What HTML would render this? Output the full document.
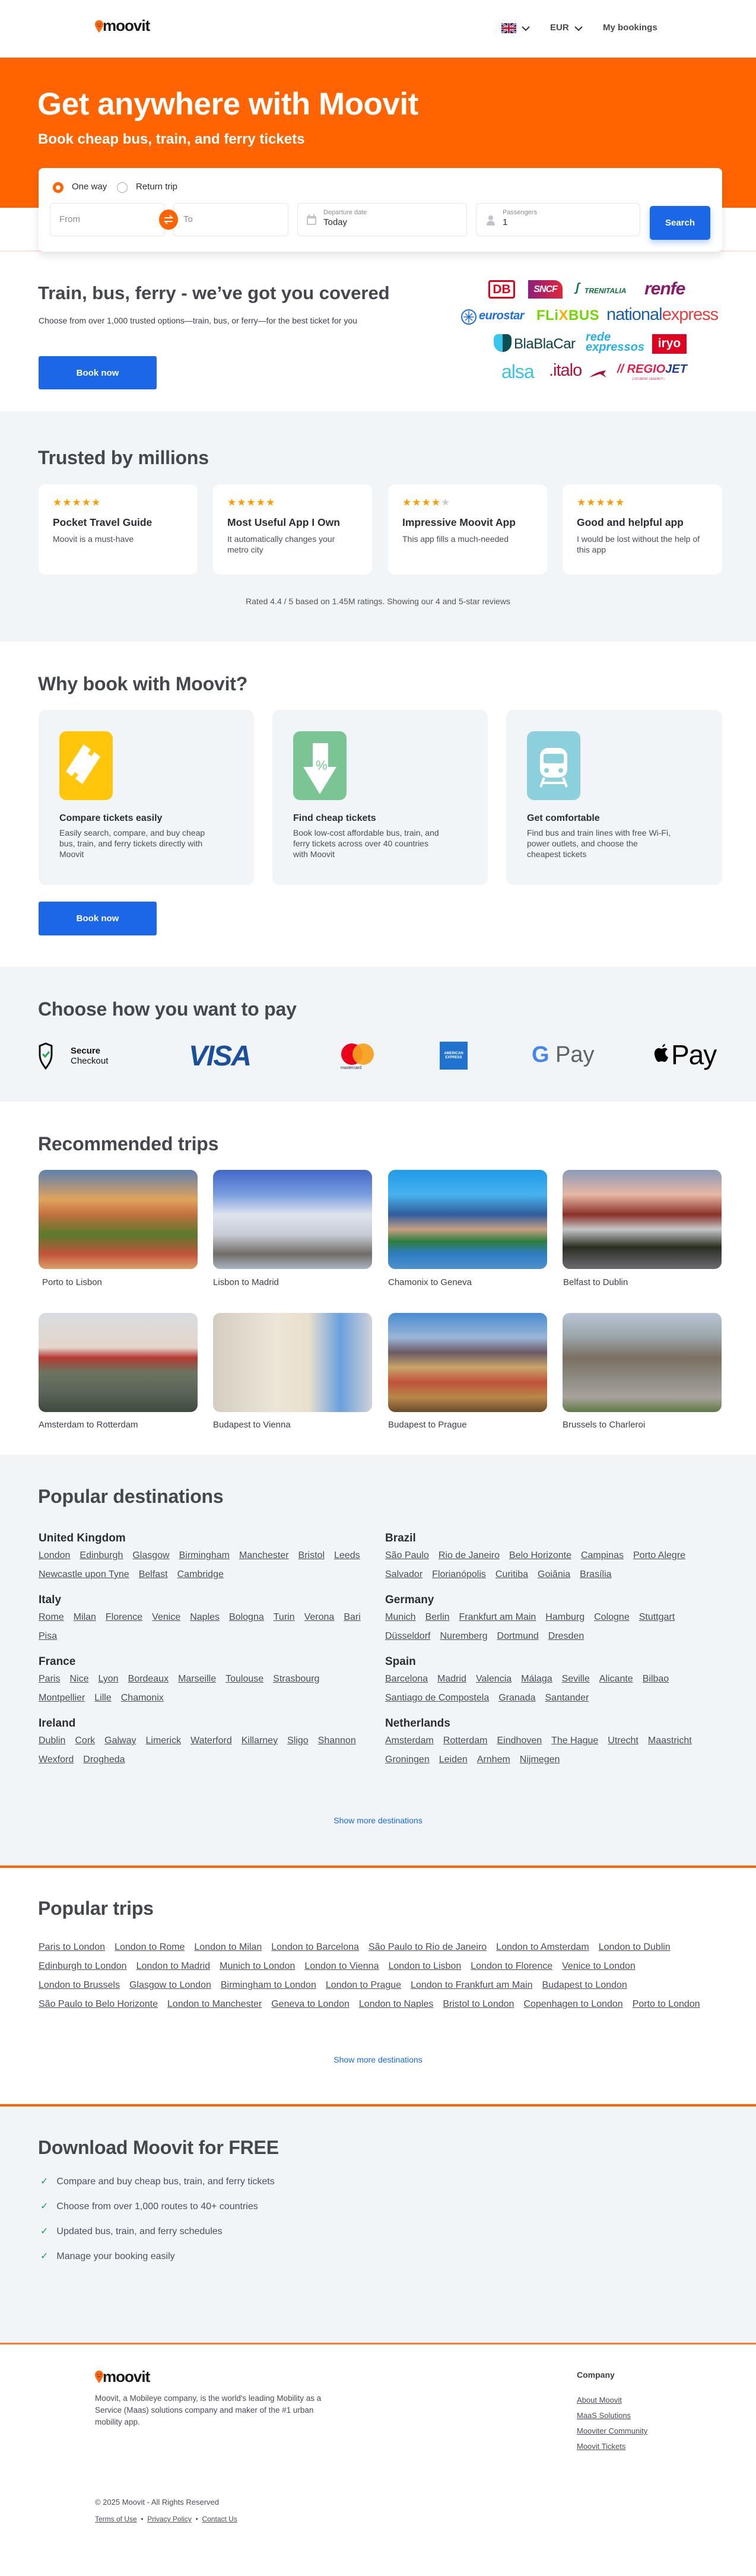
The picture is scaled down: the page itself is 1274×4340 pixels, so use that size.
<!DOCTYPE html>
<html><head><meta charset="utf-8"><title>Moovit</title>
<style>
*{box-sizing:border-box;margin:0;padding:0}
body{width:1274px;height:4340px;position:relative;font-family:"Liberation Sans",Arial,sans-serif;color:#3c3f48;background:#fff;overflow:hidden}
.a{position:absolute}
.h2{font-size:32px;font-weight:700;color:#45474f;letter-spacing:-0.2px}
.btn{background:#1c67e6;color:#fff;font-weight:700;font-size:15px;border-radius:3px;display:flex;align-items:center;justify-content:center}
.card{background:#fff;border-radius:12px}
.stars{color:#ff9a00;font-size:17px;letter-spacing:1px}
.ct{font-size:17.5px;font-weight:700;color:#2b2d33}
.cd{font-size:14px;color:#4a4d56;line-height:18px;margin-top:8px}
.links a{color:#4a4d56;text-decoration:underline;font-size:16px;margin-right:16px;display:inline-block;line-height:32px}
.cty{font-size:19px;font-weight:700;color:#2b2d33}
.cty.m{margin-top:16px}
.trip{border-radius:12px;height:167px;width:268px}
.tl{font-size:15px;color:#3c3f48}
.sm{color:#1c67e6;font-size:14px;text-align:center;width:1274px;left:0}
.chk{font-size:16px;color:#4a4f5c}
.chk b{color:#16a05a;font-weight:400;margin-right:14px}
.fl a{display:block;color:#4a4d56;font-size:13px;text-decoration:underline}
</style></head><body>

<!-- header -->
<div class="a" style="left:160px;top:34px;width:13px;height:20px">
<svg width="14" height="22" viewBox="0 0 14 22"><path d="M7 0C3 0 0 3 0 7c0 5 7 14 7 14s7-9 7-14C14 3 11 0 7 0z" fill="#ff6a10"/><circle cx="4.7" cy="6.5" r=".9" fill="#222"/><circle cx="9.3" cy="6.5" r=".9" fill="#222"/><path d="M4.5 9.5q2.5 2 5 0" stroke="#222" fill="none" stroke-width=".9"/></svg></div>
<div class="a" style="left:173px;top:28px;font-size:26px;font-weight:700;color:#1a1a1a;letter-spacing:-1px">moovit</div>
<div class="a" style="left:845px;top:39px;width:25px;height:17px">
<svg width="25" height="17" viewBox="0 0 60 40"><rect width="60" height="40" fill="#012169"/><path d="M0 0L60 40M60 0L0 40" stroke="#fff" stroke-width="8"/><path d="M0 0L60 40M60 0L0 40" stroke="#c8102e" stroke-width="3"/><path d="M30 0v40M0 20h60" stroke="#fff" stroke-width="12"/><path d="M30 0v40M0 20h60" stroke="#c8102e" stroke-width="7"/></svg></div>
<svg class="a" style="left:879px;top:43px" width="14" height="10"><path d="M1 2l6 6 6-6" stroke="#333" stroke-width="2" fill="none"/></svg>
<div class="a" style="left:927px;top:38px;font-size:15px;font-weight:700;color:#4a4a4a">EUR</div>
<svg class="a" style="left:968px;top:43px" width="14" height="10"><path d="M1 2l6 6 6-6" stroke="#333" stroke-width="2" fill="none"/></svg>
<div class="a" style="left:1016px;top:38px;font-size:15px;font-weight:700;color:#4a4a4a">My bookings</div>

<!-- hero -->
<div class="a" style="left:0;top:97px;width:1274px;height:253px;background:#ff6400"></div>
<div class="a" style="left:0;top:422px;width:1274px;height:2px;background:#fde3d2"></div>
<div class="a" style="left:63px;top:145px;font-size:53px;font-weight:700;color:#fff;letter-spacing:-0.5px">Get anywhere with Moovit</div>
<div class="a" style="left:64px;top:221px;font-size:24px;font-weight:700;color:#fff">Book cheap bus, train, and ferry tickets</div>

<div class="a" style="left:65px;top:283px;width:1152px;height:141px;background:#fff;border-radius:8px;box-shadow:0 6px 14px rgba(0,0,0,.12)"></div>
<div class="a" style="left:89px;top:307px;width:18px;height:18px;border-radius:50%;border:5px solid #ff6400"></div>
<div class="a" style="left:121px;top:306px;font-size:15px;color:#2b2d33">One way</div>
<div class="a" style="left:197px;top:307px;width:18px;height:18px;border-radius:50%;border:1px solid #aaa"></div>
<div class="a" style="left:229px;top:306px;font-size:15px;color:#2b2d33">Return trip</div>

<div class="a" style="left:84px;top:342px;width:194px;height:56px;border:1px solid #e4e6ea;border-radius:6px"></div>
<div class="a" style="left:100px;top:361px;font-size:15px;color:#8a8d96">From</div>
<div class="a" style="left:292px;top:342px;width:194px;height:56px;border:1px solid #e4e6ea;border-radius:6px"></div>
<div class="a" style="left:309px;top:361px;font-size:15px;color:#8a8d96">To</div>
<div class="a" style="left:268px;top:353px;width:32px;height:34px;border-radius:50%;background:#ff6400"></div>
<svg class="a" style="left:274px;top:360px" width="20" height="20"><path d="M3 7h13l-4-4M17 13H4l4 4" stroke="#fff" stroke-width="2" fill="none"/></svg>
<div class="a" style="left:501px;top:342px;width:286px;height:56px;border:1px solid #e4e6ea;border-radius:6px"></div>
<svg class="a" style="left:516px;top:360px" width="18" height="20"><rect x="1" y="4" width="16" height="15" rx="2" fill="#c2c3cc"/><rect x="3" y="8" width="12" height="9" fill="#fff"/><rect x="4" y="1" width="2" height="4" fill="#c2c3cc"/><rect x="12" y="1" width="2" height="4" fill="#c2c3cc"/></svg>
<div class="a" style="left:545px;top:352px;font-size:11px;color:#8a8d96">Departure date</div>
<div class="a" style="left:545px;top:366px;font-size:15px;color:#2b2d33">Today</div>
<div class="a" style="left:802px;top:342px;width:277px;height:56px;border:1px solid #e4e6ea;border-radius:6px"></div>
<svg class="a" style="left:819px;top:362px" width="16" height="18"><circle cx="8" cy="5" r="4" fill="#c2c3cc"/><path d="M1 18c0-6 3-8 7-8s7 2 7 8z" fill="#c2c3cc"/></svg>
<div class="a" style="left:847px;top:352px;font-size:11px;color:#8a8d96">Passengers</div>
<div class="a" style="left:847px;top:366px;font-size:15px;color:#2b2d33">1</div>
<div class="a btn" style="left:1095px;top:347px;width:102px;height:57px;border-radius:5px;box-shadow:0 5px 10px rgba(28,103,230,.3)">Search</div>

<!-- covered -->
<div class="a" style="left:64px;top:476px;font-size:31px;font-weight:700;color:#45474f">Train, bus, ferry - we’ve got you covered</div>
<div class="a" style="left:65px;top:532px;font-size:14px;color:#3c3f48">Choose from over 1,000 trusted options—train, bus, or ferry—for the best ticket for you</div>
<div class="a btn" style="left:65px;top:600px;width:199px;height:56px">Book now</div>

<!-- operator logos -->
<div class="a" style="left:823px;top:472px;width:45px;height:31px;border:3px solid #e3001b;border-radius:4px;color:#e3001b;font-weight:700;font-size:21px;text-align:center;line-height:25px">DB</div>
<div class="a" style="left:890px;top:472px;width:58px;height:31px;background:linear-gradient(90deg,#8e1d7d,#e3263a);border-radius:0 14px 0 0;color:#fff;font-weight:700;font-style:italic;font-size:16px;text-align:center;line-height:31px;letter-spacing:-1px">SNCF</div>
<div class="a" style="left:970px;top:474px;font-size:20px;font-weight:700;font-style:italic;color:#0d7a4a">ʃ</div>
<div class="a" style="left:985px;top:483px;font-size:12px;font-weight:700;font-style:italic;color:#0d6a3e">TRENITALIA</div>
<div class="a" style="left:1086px;top:470px;font-size:30px;font-weight:700;font-style:italic;color:#8a1a6a;letter-spacing:-1px">renfe</div>

<svg class="a" style="left:776px;top:520px" width="28" height="28"><circle cx="14" cy="14" r="12" fill="none" stroke="#1f6ee9" stroke-width="2"/><path d="M14 4v20M5 14h18M8 8l12 12M20 8L8 20" stroke="#1f6ee9" stroke-width="1.5"/></svg>
<div class="a" style="left:807px;top:521px;font-size:20px;font-weight:700;font-style:italic;color:#1f6ee9;letter-spacing:-0.5px">eurostar</div>
<div class="a" style="left:904px;top:518px;font-size:24px;font-weight:700;color:#73d700;letter-spacing:0.5px">FLi<span style="color:#ffad00">X</span>BUS</div>
<div class="a" style="left:1022px;top:514px;font-size:29px;color:#1d5ea8;letter-spacing:-1px">national<span style="color:#e63f3f">express</span></div>

<div class="a" style="left:832px;top:563px;width:30px;height:30px;border-radius:8px 8px 16px 16px;background:linear-gradient(90deg,#3ac7ef 50%,#0b4f53 50%)"></div>
<div class="a" style="left:866px;top:566px;font-size:24px;color:#0b4049;letter-spacing:-0.5px">BlaBlaCar</div>
<div class="a" style="left:987px;top:560px;font-size:20px;font-weight:700;color:#26b2e8;line-height:17px;font-style:italic">rede<br>expressos</div>
<div class="a" style="left:1099px;top:563px;width:58px;height:33px;background:#e00022;color:#fff;font-weight:700;font-size:21px;text-align:center;line-height:31px">iryo</div>

<div class="a" style="left:845px;top:608px;font-size:32px;color:#3ac2e8;letter-spacing:-1px">alsa</div>
<div class="a" style="left:925px;top:608px;font-size:29px;color:#a8123b;letter-spacing:-1px">.italo</div>
<svg class="a" style="left:993px;top:622px" width="30" height="16"><path d="M0 14Q12 4 28 2L24 8 29 14 18 8Z" fill="#a8123b"/></svg>
<div class="a" style="left:1040px;top:611px;font-size:20px;font-weight:700;font-style:italic;color:#e41f4e">// REGIO<span style="color:#1c3f94">JET</span></div>
<div class="a" style="left:1066px;top:636px;font-size:5px;color:#e41f4e">| STUDENT | AGENCY |</div>

<!-- trusted -->
<div class="a" style="left:0;top:693px;width:1274px;height:388px;background:#f2f5f8"></div>
<div class="a h2" style="left:64px;top:753px">Trusted by millions</div>
<div class="a card" style="left:65px;top:816px;width:268px;height:152px;padding:21px 24px">
<div class="stars">★★★★★</div><div class="ct" style="margin-top:13px">Pocket Travel Guide</div><div class="cd">Moovit is a must-have</div></div>
<div class="a card" style="left:359px;top:816px;width:268px;height:152px;padding:21px 24px">
<div class="stars">★★★★★</div><div class="ct" style="margin-top:13px">Most Useful App I Own</div><div class="cd">It automatically changes your<br>metro city</div></div>
<div class="a card" style="left:654px;top:816px;width:268px;height:152px;padding:21px 24px">
<div class="stars">★★★★<span style="color:#ccc">★</span></div><div class="ct" style="margin-top:13px">Impressive Moovit App</div><div class="cd">This app fills a much-needed</div></div>
<div class="a card" style="left:948px;top:816px;width:269px;height:152px;padding:21px 24px">
<div class="stars">★★★★★</div><div class="ct" style="margin-top:13px">Good and helpful app</div><div class="cd">I would be lost without the help of<br>this app</div></div>
<div class="a" style="left:0;width:1274px;top:1005px;text-align:center;font-size:14px;color:#555">Rated 4.4 / 5 based on 1.45M ratings. Showing our 4 and 5-star reviews</div>

<!-- why -->
<div class="a h2" style="left:64px;top:1134px">Why book with Moovit?</div>
<div class="a" style="left:65px;top:1196px;width:363px;height:295px;background:#f2f5f8;border-radius:12px"></div>
<div class="a" style="left:459px;top:1196px;width:363px;height:295px;background:#f2f5f8;border-radius:12px"></div>
<div class="a" style="left:853px;top:1196px;width:364px;height:295px;background:#f2f5f8;border-radius:12px"></div>
<div class="a" style="left:100px;top:1232px;width:90px;height:116px;background:#ffc60b;border-radius:12px"></div>
<svg class="a" style="left:108px;top:1252px" width="74" height="76"><path d="M33 2l12 9-5 7 6 4 5-7 10 8-30 46-12-9 5-7-6-4-5 7-10-8z" fill="#fff"/></svg>
<div class="a" style="left:494px;top:1232px;width:90px;height:116px;background:#7ac593;border-radius:12px"></div>
<svg class="a" style="left:510px;top:1252px" width="58" height="86"><path d="M17 0h26v40h14L29 86 1 40h16z" fill="#fff"/><text x="22" y="45" font-family="Liberation Sans" font-size="22" fill="#7ac593">%</text></svg>
<div class="a" style="left:888px;top:1232px;width:90px;height:116px;background:#8dd0dd;border-radius:12px"></div>
<svg class="a" style="left:907px;top:1258px" width="52" height="70"><rect x="3" y="2" width="46" height="50" rx="14" fill="#fff"/><rect x="9" y="12" width="34" height="16" rx="3" fill="#8dd0dd"/><circle cx="14" cy="40" r="4" fill="#8dd0dd"/><circle cx="38" cy="40" r="4" fill="#8dd0dd"/><path d="M10 52L4 68M42 52l6 16M8 61h36" stroke="#fff" stroke-width="4"/></svg>
<div class="a" style="left:100px;top:1370px"><div class="ct" style="font-size:16px">Compare tickets easily</div><div class="cd" style="margin-top:6px">Easily search, compare, and buy cheap<br>bus, train, and ferry tickets directly with<br>Moovit</div></div>
<div class="a" style="left:494px;top:1370px"><div class="ct" style="font-size:16px">Find cheap tickets</div><div class="cd" style="margin-top:6px">Book low-cost affordable bus, train, and<br>ferry tickets across over 40 countries<br>with Moovit</div></div>
<div class="a" style="left:888px;top:1370px"><div class="ct" style="font-size:16px">Get comfortable</div><div class="cd" style="margin-top:6px">Find bus and train lines with free Wi-Fi,<br>power outlets, and choose the<br>cheapest tickets</div></div>
<div class="a btn" style="left:65px;top:1519px;width:199px;height:57px">Book now</div>

<!-- pay -->
<div class="a" style="left:0;top:1629px;width:1274px;height:227px;background:#f2f5f8"></div>
<div class="a h2" style="left:64px;top:1682px">Choose how you want to pay</div>
<svg class="a" style="left:65px;top:1756px" width="24" height="46"><path d="M12 2L2 6v14c0 10 4 16 10 24 6-8 10-14 10-24V6z" fill="none" stroke="#111" stroke-width="3"/><path d="M7 20l4 4 7-8" stroke="#1aaa55" stroke-width="3" fill="none"/></svg>
<div class="a" style="left:119px;top:1762px;font-size:15px;font-weight:700;color:#111">Secure</div>
<div class="a" style="left:119px;top:1779px;font-size:15px;color:#111">Checkout</div>
<div class="a" style="left:318px;top:1752px;font-size:48px;font-weight:700;font-style:italic;color:#1a4f9c;letter-spacing:-2px">VISA</div>
<div class="a" style="left:575px;top:1758px;width:36px;height:36px;border-radius:50%;background:#eb001b"></div>
<div class="a" style="left:594px;top:1758px;width:36px;height:36px;border-radius:50%;background:#f79e1b;opacity:.92"></div>
<div class="a" style="left:574px;top:1796px;font-size:7px;color:#222">mastercard</div>
<div class="a" style="left:741px;top:1755px;width:47px;height:47px;background:#1f72cd;color:#fff;font-size:6px;font-weight:700;text-align:center;padding-top:17px;line-height:7px">AMERICAN<br>EXPRESS</div>
<div class="a" style="left:896px;top:1756px;font-size:38px;font-weight:700;color:#4285f4">G</div>
<div class="a" style="left:936px;top:1756px;font-size:38px;color:#5f6368">Pay</div>
<div class="a" style="left:1101px;top:1750px;font-size:46px;color:#000;letter-spacing:-1px"><svg width="30" height="40" style="vertical-align:-2px"><path d="M20 4c-3 0-5 3-5 5 3 0 5-3 5-5zM15 12c-3 0-5-2-7-1-4 1-7 5-6 11 1 6 4 12 7 12 2 0 3-1 5-1s3 1 5 1c3 0 5-5 6-8-3-1-5-4-5-7s2-5 4-6c-2-2-4-3-6-2-2 0-3 1-3 1z" fill="#000"/></svg>Pay</div>

<!-- recommended -->
<div class="a h2" style="left:64px;top:1909px">Recommended trips</div>
<div class="a trip" style="left:65px;top:1971px;background:linear-gradient(180deg,#5d7fae 0%,#e0a45c 30%,#c2703e 45%,#5a7a2c 65%,#c2543a 85%,#d9a06a 100%)"></div>
<div class="a trip" style="left:359px;top:1971px;background:linear-gradient(180deg,#4168c8 0%,#7a9de0 25%,#dfe3ec 45%,#c8ccd6 65%,#706d68 85%,#aab4c0 100%)"></div>
<div class="a trip" style="left:654px;top:1971px;background:linear-gradient(180deg,#1f9be8 0%,#48b2ee 25%,#2f5d9c 45%,#c79f82 60%,#2d7e3e 72%,#2f7cc4 85%,#4d90cc 100%)"></div>
<div class="a trip" style="left:948px;top:1971px;background:linear-gradient(180deg,#8a9ab8 0%,#e8b8a4 25%,#8a3028 45%,#c3c7c7 60%,#2b2e22 78%,#6b6a70 100%)"></div>
<div class="a tl" style="left:71px;top:2152px">Porto to Lisbon</div>
<div class="a tl" style="left:359px;top:2152px">Lisbon to Madrid</div>
<div class="a tl" style="left:654px;top:2152px">Chamonix to Geneva</div>
<div class="a tl" style="left:949px;top:2152px">Belfast to Dublin</div>
<div class="a trip" style="left:65px;top:2212px;background:linear-gradient(180deg,#d8dce0 0%,#e4d6cc 35%,#b53a32 45%,#6b7560 60%,#5b6459 80%,#3f4a3e 100%)"></div>
<div class="a trip" style="left:359px;top:2212px;background:linear-gradient(90deg,#d4cec0 0%,#ece6d8 40%,#e8e0cc 60%,#6aa0de 80%,#cfd2d8 100%)"></div>
<div class="a trip" style="left:654px;top:2212px;background:linear-gradient(180deg,#4a8cd0 0%,#9bb6d8 25%,#6b5a66 40%,#c9a46a 55%,#c0523a 70%,#b8884a 85%,#6b4a2a 100%)"></div>
<div class="a trip" style="left:948px;top:2212px;background:linear-gradient(180deg,#b7c6d4 0%,#9aa3a8 25%,#7b6f62 45%,#8c8a82 65%,#a8a29a 85%,#5f7a44 100%)"></div>
<div class="a tl" style="left:65px;top:2392px">Amsterdam to Rotterdam</div>
<div class="a tl" style="left:359px;top:2392px">Budapest to Vienna</div>
<div class="a tl" style="left:654px;top:2392px">Budapest to Prague</div>
<div class="a tl" style="left:948px;top:2392px">Brussels to Charleroi</div>

<!-- popular destinations -->
<div class="a" style="left:0;top:2451px;width:1274px;height:694px;background:#f2f5f8"></div>
<div class="a h2" style="left:64px;top:2503px">Popular destinations</div>
<div class="a" style="left:65px;top:2581px;width:580px">
<div class="cty">United Kingdom</div>
<div class="links" style="margin-top:2px"><a>London</a><a>Edinburgh</a><a>Glasgow</a><a>Birmingham</a><a>Manchester</a><a>Bristol</a><a>Leeds</a><br><a>Newcastle upon Tyne</a><a>Belfast</a><a>Cambridge</a></div>
<div class="cty m">Italy</div>
<div class="links" style="margin-top:2px"><a>Rome</a><a>Milan</a><a>Florence</a><a>Venice</a><a>Naples</a><a>Bologna</a><a>Turin</a><a>Verona</a><a>Bari</a><br><a>Pisa</a></div>
<div class="cty m">France</div>
<div class="links" style="margin-top:2px"><a>Paris</a><a>Nice</a><a>Lyon</a><a>Bordeaux</a><a>Marseille</a><a>Toulouse</a><a>Strasbourg</a><br><a>Montpellier</a><a>Lille</a><a>Chamonix</a></div>
<div class="cty m">Ireland</div>
<div class="links" style="margin-top:2px"><a>Dublin</a><a>Cork</a><a>Galway</a><a>Limerick</a><a>Waterford</a><a>Killarney</a><a>Sligo</a><a>Shannon</a><br><a>Wexford</a><a>Drogheda</a></div>
</div>
<div class="a" style="left:649px;top:2581px;width:590px">
<div class="cty">Brazil</div>
<div class="links" style="margin-top:2px"><a>São Paulo</a><a>Rio de Janeiro</a><a>Belo Horizonte</a><a>Campinas</a><a>Porto Alegre</a><br><a>Salvador</a><a>Florianópolis</a><a>Curitiba</a><a>Goiânia</a><a>Brasília</a></div>
<div class="cty m">Germany</div>
<div class="links" style="margin-top:2px"><a>Munich</a><a>Berlin</a><a>Frankfurt am Main</a><a>Hamburg</a><a>Cologne</a><a>Stuttgart</a><br><a>Düsseldorf</a><a>Nuremberg</a><a>Dortmund</a><a>Dresden</a></div>
<div class="cty m">Spain</div>
<div class="links" style="margin-top:2px"><a>Barcelona</a><a>Madrid</a><a>Valencia</a><a>Málaga</a><a>Seville</a><a>Alicante</a><a>Bilbao</a><br><a>Santiago de Compostela</a><a>Granada</a><a>Santander</a></div>
<div class="cty m">Netherlands</div>
<div class="links" style="margin-top:2px"><a>Amsterdam</a><a>Rotterdam</a><a>Eindhoven</a><a>The Hague</a><a>Utrecht</a><a>Maastricht</a><br><a>Groningen</a><a>Leiden</a><a>Arnhem</a><a>Nijmegen</a></div>
</div>
<div class="a sm" style="top:3059px">Show more destinations</div>

<!-- popular trips -->
<div class="a" style="left:0;top:3143px;width:1274px;height:4px;background:#ff6400"></div>
<div class="a h2" style="left:64px;top:3197px">Popular trips</div>
<div class="a links" style="left:65px;top:3265px;width:1200px">
<a>Paris to London</a><a>London to Rome</a><a>London to Milan</a><a>London to Barcelona</a><a>São Paulo to Rio de Janeiro</a><a>London to Amsterdam</a><a>London to Dublin</a><br>
<a>Edinburgh to London</a><a>London to Madrid</a><a>Munich to London</a><a>London to Vienna</a><a>London to Lisbon</a><a>London to Florence</a><a>Venice to London</a><br>
<a>London to Brussels</a><a>Glasgow to London</a><a>Birmingham to London</a><a>London to Prague</a><a>London to Frankfurt am Main</a><a>Budapest to London</a><br>
<a>São Paulo to Belo Horizonte</a><a>London to Manchester</a><a>Geneva to London</a><a>London to Naples</a><a>Bristol to London</a><a>Copenhagen to London</a><a>Porto to London</a></div>
<div class="a sm" style="top:3462px">Show more destinations</div>

<!-- download -->
<div class="a" style="left:0;top:3545px;width:1274px;height:404px;background:#f2f5f8;border-top:4px solid #ff6400"></div>
<div class="a h2" style="left:64px;top:3600px">Download Moovit for FREE</div>
<div class="a chk" style="left:68px;top:3665px"><b>✓</b>Compare and buy cheap bus, train, and ferry tickets</div>
<div class="a chk" style="left:68px;top:3707px"><b>✓</b>Choose from over 1,000 routes to 40+ countries</div>
<div class="a chk" style="left:68px;top:3749px"><b>✓</b>Updated bus, train, and ferry schedules</div>
<div class="a chk" style="left:68px;top:3791px"><b>✓</b>Manage your booking easily</div>

<!-- footer -->
<div class="a" style="left:0;top:3947px;width:1274px;height:3px;background:#ff7a2a"></div>
<div class="a" style="left:160px;top:3994px"><svg width="14" height="22" viewBox="0 0 14 22"><path d="M7 0C3 0 0 3 0 7c0 5 7 14 7 14s7-9 7-14C14 3 11 0 7 0z" fill="#ff6a10"/><circle cx="4.7" cy="6.5" r=".9" fill="#222"/><circle cx="9.3" cy="6.5" r=".9" fill="#222"/><path d="M4.5 9.5q2.5 2 5 0" stroke="#222" fill="none" stroke-width=".9"/></svg></div>
<div class="a" style="left:173px;top:3989px;font-size:26px;font-weight:700;color:#1a1a1a;letter-spacing:-1px">moovit</div>
<div class="a" style="left:160px;top:4031px;font-size:13.5px;color:#4a4d56;line-height:20px;width:410px">Moovit, a Mobileye company, is the world's leading Mobility as a<br>Service (Maas) solutions company and maker of the #1 urban<br>mobility app.</div>
<div class="a" style="left:972px;top:3993px;font-size:14px;font-weight:700;color:#3c3f48">Company</div>
<div class="a fl" style="left:972px;top:4031px;line-height:26px"><a>About Moovit</a><a>MaaS Solutions</a><a>Mooviter Community</a><a>Moovit Tickets</a></div>
<div class="a" style="left:160px;top:4208px;font-size:13px;color:#4a4d56">© 2025 Moovit - All Rights Reserved</div>
<div class="a" style="left:160px;top:4237px;font-size:12px;color:#4a4d56"><u>Terms of Use</u> &nbsp;•&nbsp; <u>Privacy Policy</u> &nbsp;•&nbsp; <u>Contact Us</u></div>
</body></html>
